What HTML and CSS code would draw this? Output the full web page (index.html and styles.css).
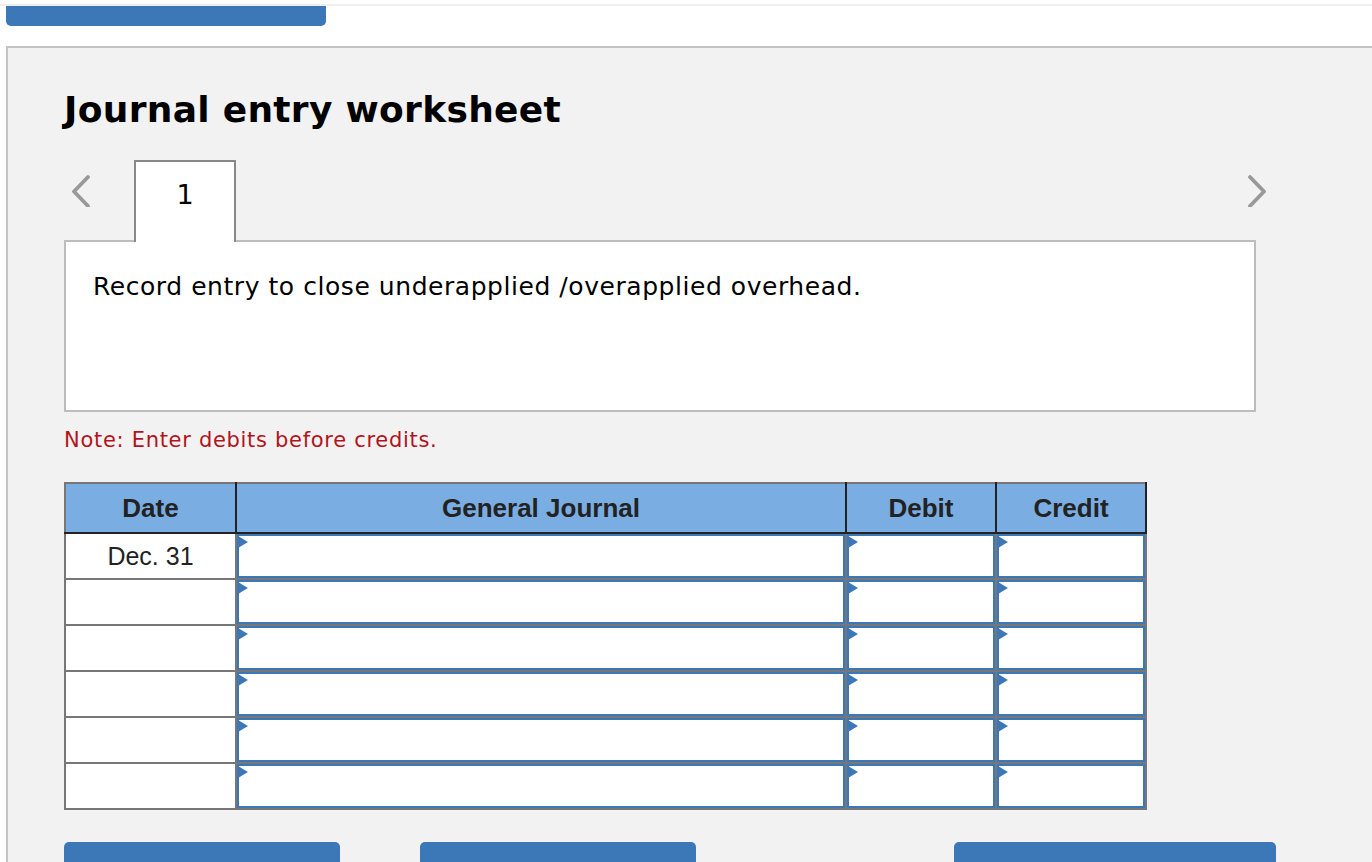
FILE: index.html
```html
<!DOCTYPE html>
<html>
<head>
<meta charset="utf-8">
<link rel="stylesheet" href="styles.css">
</head>
<body>
<div class="topline"></div>
<div class="topbar"></div>
<div class="panel">
  <h1 class="title">Journal entry worksheet</h1>
  <div class="tabrow">
    <div class="nav nav-left">
      <svg width="24" height="34" viewBox="0 0 24 34"><polyline points="19,4 5,18.5 19,33" fill="none" stroke="#999" stroke-width="3.8" stroke-linecap="round" stroke-linejoin="round"/></svg>
    </div>
    <div class="tab">1</div>
    <div class="nav nav-right">
      <svg width="24" height="34" viewBox="0 0 24 34"><polyline points="4,4 18,18.5 4,33" fill="none" stroke="#999" stroke-width="3.8" stroke-linecap="round" stroke-linejoin="round"/></svg>
    </div>
  </div>
  <div class="desc">Record entry to close underapplied /overapplied overhead.</div>
  <div class="note">Note: Enter debits before credits.</div>
  <table class="journal">
    <colgroup>
      <col class="c-date"><col class="c-gj"><col class="c-num"><col class="c-num">
    </colgroup>
    <thead>
      <tr><th>Date</th><th>General Journal</th><th>Debit</th><th>Credit</th></tr>
    </thead>
    <tbody>
      <tr><td class="date">Dec. 31</td><td><div class="field"></div></td><td><div class="field"></div></td><td><div class="field"></div></td></tr>
      <tr><td class="date"></td><td><div class="field"></div></td><td><div class="field"></div></td><td><div class="field"></div></td></tr>
      <tr><td class="date"></td><td><div class="field"></div></td><td><div class="field"></div></td><td><div class="field"></div></td></tr>
      <tr><td class="date"></td><td><div class="field"></div></td><td><div class="field"></div></td><td><div class="field"></div></td></tr>
      <tr><td class="date"></td><td><div class="field"></div></td><td><div class="field"></div></td><td><div class="field"></div></td></tr>
      <tr><td class="date"></td><td><div class="field"></div></td><td><div class="field"></div></td><td><div class="field"></div></td></tr>
    </tbody>
  </table>
  <div class="buttons">
    <div class="btn btn-a"></div>
    <div class="btn btn-b"></div>
    <div class="btn btn-c"></div>
  </div>
</div>
</body>
</html>
```
FILE: styles.css
```css
html, body {
  margin: 0;
  padding: 0;
  background: #fff;
  height: 862px;
  overflow: hidden;
}
body {
  font-family: "DejaVu Sans", Verdana, sans-serif;
  color: #000;
}
.topline {
  margin-top: 4px;
  height: 2px;
  background: #efefef;
}
.topbar {
  margin-left: 6px;
  width: 320px;
  height: 20px;
  background: #3c78b7;
  border-radius: 0 0 5px 5px;
}
.panel {
  margin: 20px 0 0 6px;
  width: 1324px;
  height: 814px;
  background: #f2f2f2;
  border: 2px solid #c4c4c4;
  border-bottom: none;
  padding-left: 56px;
  box-sizing: content-box;
}
.title {
  margin: 40px 0 0 0;
  font-size: 36px;
  line-height: 44px;
  font-weight: bold;
  letter-spacing: 0.3px;
}
.tabrow {
  margin-top: 28px;
  width: 1212px;
  display: flex;
  align-items: flex-start;
}
.nav {
  padding-top: 13px;
}
.nav svg { display: block; }
.nav-left {
  width: 70px;
  padding-left: 5px;
  box-sizing: border-box;
}
.nav-right {
  margin-left: auto;
  margin-right: 6px;
}
.tab {
  width: 102px;
  height: 82px;
  box-sizing: border-box;
  background: #fff;
  border: 2px solid #888;
  border-bottom: none;
  text-align: center;
  font-size: 27px;
  line-height: 27px;
  padding-top: 19px;
  margin-bottom: -2px;
  position: relative;
  z-index: 1;
}
.desc {
  width: 1192px;
  height: 172px;
  box-sizing: border-box;
  background: #fff;
  border: 2px solid #bdbdbd;
  padding: 30px 0 0 27px;
  font-size: 25px;
  line-height: 30px;
  letter-spacing: 0.55px;
}
.note {
  margin-top: 14px;
  color: #b3131b;
  font-size: 21px;
  line-height: 28px;
  letter-spacing: 0.7px;
}
.journal {
  margin-top: 28px;
  border-collapse: collapse;
  table-layout: fixed;
  width: 1082px;
  font-family: "Liberation Sans", Arial, sans-serif;
  color: #222;
}
.c-date { width: 171px; }
.c-gj { width: 610px; }
.c-num { width: 150px; }
.journal th {
  background: #7aade1;
  height: 48px;
  border: 2px solid #222;
  border-top-color: #777;
  font-size: 26px;
  font-weight: bold;
  padding: 0;
}
.journal th:first-child {
  border-left-color: #777;
}
.journal td {
  border: 2px solid #777;
  padding: 0;
  height: 44px;
  background: #fff;
}
.journal td.date {
  text-align: center;
  font-size: 25px;
}
.field {
  position: relative;
  height: 44px;
  box-sizing: border-box;
  border: 2px solid #3c78b7;
}
.field::before {
  content: "";
  position: absolute;
  left: -1px;
  top: 0;
  width: 0;
  height: 0;
  border-left: 10px solid #3c78b7;
  border-top: 6.5px solid transparent;
  border-bottom: 6.5px solid transparent;
}
.buttons {
  margin-top: 32px;
  display: flex;
}
.btn {
  height: 20px;
  background: #3c78b7;
  border-radius: 5px 5px 0 0;
}
.btn-a { width: 276px; }
.btn-b { width: 276px; margin-left: 80px; }
.btn-c { width: 322px; margin-left: 258px; }
```
